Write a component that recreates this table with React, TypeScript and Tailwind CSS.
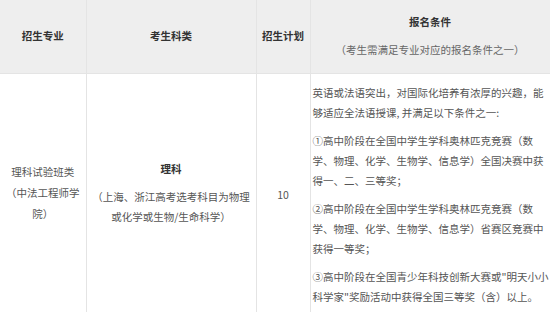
const font = { fontFamily: '"Noto Sans CJK SC", "Noto Sans", sans-serif' }

export default function App() {
  return (
    <div className="w-[550px] bg-white text-[10.5px] text-[#555]" style={font}>
      <table className="w-[550px] border-collapse table-fixed">
        <colgroup>
          <col className="w-[86px]" />
          <col className="w-[170px]" />
          <col className="w-[54px]" />
          <col className="w-[240px]" />
        </colgroup>
        <thead>
          <tr className="h-[73px] bg-[#eeeeee] text-[#333]">
            <th className="border-r border-b border-[#e4e4e4] font-bold">招生专业</th>
            <th className="border-r border-b border-[#e4e4e4] font-bold">考生科类</th>
            <th className="border-r border-b border-[#e4e4e4] font-bold">招生计划</th>
            <th className="border-r border-b border-[#e4e4e4] font-normal">
              <p className="font-bold leading-[20px]">报名条件</p>
              <p className="mt-[8px] leading-[20px] text-[#666]">（考生需满足专业对应的报名条件之一）</p>
            </th>
          </tr>
        </thead>
        <tbody>
          <tr>
            <td className="border-r border-[#e4e4e4] px-[4px] pb-[4px] text-center leading-[21px]">
              理科试验班类（中法工程师学院）
            </td>
            <td className="border-r border-[#e4e4e4] px-[4px] pb-[4px] text-center">
              <p className="font-bold text-[#333] leading-[20px]">理科</p>
              <p className="mt-[8px] leading-[20px]">（上海、浙江高考选考科目为物理或化学或生物/生命科学）</p>
            </td>
            <td className="border-r border-[#e4e4e4] text-center">10</td>
            <td className="border-r border-[#e4e4e4] pl-[2px] pr-[1px] pt-[9px] pb-[9px] leading-[20px]">
              <p>英语或法语突出，对国际化培养有浓厚的兴趣，能够适应全法语授课, 并满足以下条件之一:</p>
              <p className="mt-[8px]">①高中阶段在全国中学生学科奥林匹克竞赛（数学、物理、化学、生物学、信息学）全国决赛中获得一、二、三等奖；</p>
              <p className="mt-[8px]">②高中阶段在全国中学生学科奥林匹克竞赛（数学、物理、化学、生物学、信息学）省赛区竞赛中获得一等奖；</p>
              <p className="mt-[8px]">③高中阶段在全国青少年科技创新大赛或"明天小小科学家"奖励活动中获得全国三等奖（含）以上。</p>
            </td>
          </tr>
        </tbody>
      </table>
    </div>
  )
}
